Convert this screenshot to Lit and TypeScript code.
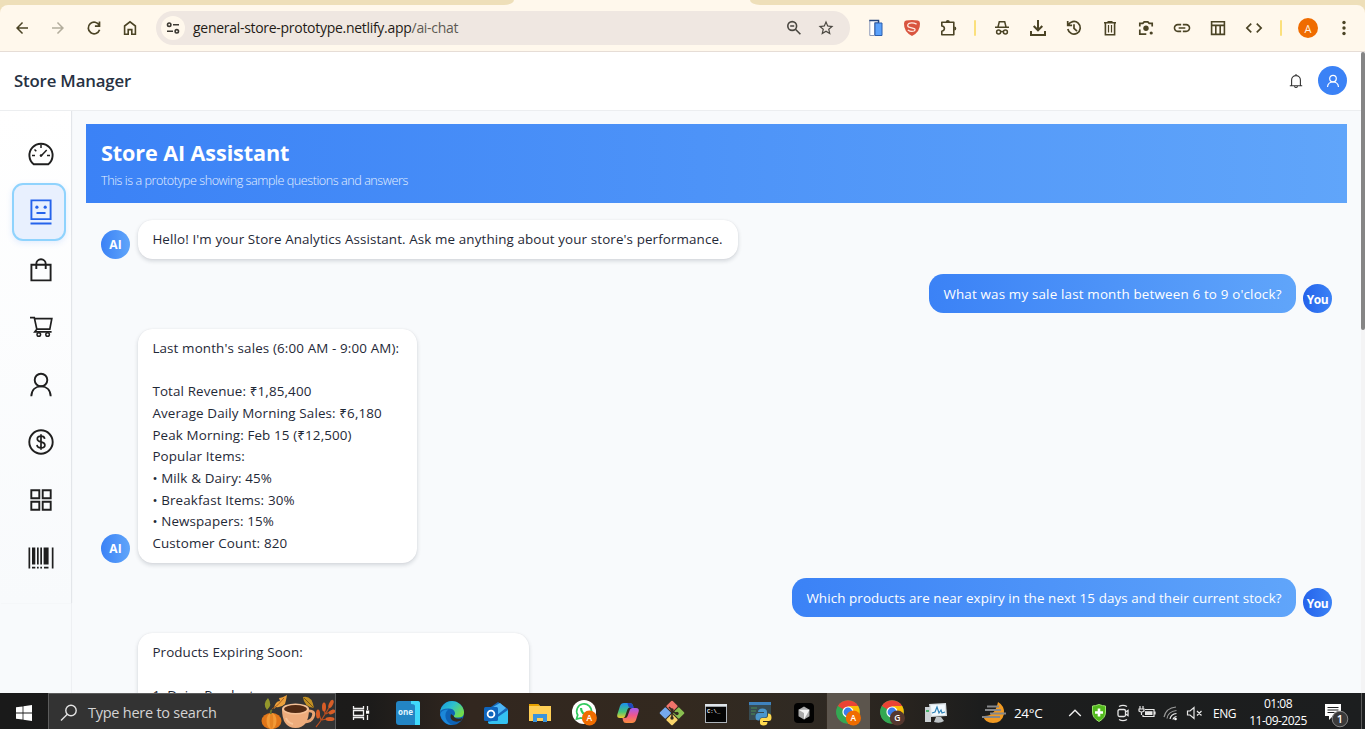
import { LitElement, html, css, svg } from "lit";
import { customElement } from "lit/decorators.js";

const icon = (w: number, h: number, body: unknown, box = `0 0 ${w} ${h}`) =>
  html`<svg width=${w} height=${h} viewBox=${box} fill="none">${body}</svg>`;
const material = (d: string, size = 18) =>
  icon(size, size, svg`<path fill="currentColor" d=${d}/>`, "0 0 24 24");

const BACK = "M20 11H7.83l5.59-5.59L12 4l-8 8 8 8 1.41-1.41L7.83 13H20z";
const FORWARD = "M4 11h12.17l-5.59-5.59L12 4l8 8-8 8-1.41-1.41L16.17 13H4z";
const STAR =
  "M22 9.24l-7.19-.62L12 2 9.19 8.63 2 9.24l5.46 4.73L5.82 21 12 17.27 18.18 21l-1.63-7.03L22 9.24zM12 15.4l-3.76 2.27 1-4.28-3.32-2.88 4.38-.38L12 6.1l1.71 4.04 4.38.38-3.32 2.88 1 4.28L12 15.4z";
const LINK =
  "M3.9 12c0-1.71 1.39-3.1 3.1-3.1h4V7H7c-2.76 0-5 2.24-5 5s2.24 5 5 5h4v-1.9H7c-1.71 0-3.1-1.39-3.1-3.1zM8 13h8v-2H8v2zm9-6h-4v1.9h4c1.71 0 3.1 1.39 3.1 3.1s-1.39 3.1-3.1 3.1h-4V17h4c2.76 0 5-2.24 5-5s-2.24-5-5-5z";
const CODE =
  "M9.4 16.6L4.8 12l4.6-4.6L8 6l-6 6 6 6 1.4-1.4zm5.2 0l4.6-4.6-4.6-4.6L16 6l6 6-6 6-1.4-1.4z";

@customElement("browser-bar")
class BrowserBar extends LitElement {
  static styles = css`
    :host { display: block; height: 52px; background: #eedfb9; font-family: "Open Sans", "Noto Sans", sans-serif; overflow: hidden; }
    .tabs { height: 5px; display: flex; padding-left: 504px; }
    .tab { width: 256px; height: 5px; background: #fff8ec; display: flex; justify-content: space-between; }
    .tab i { width: 10px; height: 5px; background: #eedfb9; }
    .tab i:first-child { border-bottom-right-radius: 10px 5px; }
    .tab i:last-child { border-bottom-left-radius: 10px 5px; }
    .bar { height: 47px; box-sizing: border-box; background: #fff8ec; border-bottom: 1px solid #e6ddd6; border-radius: 8px 8px 0 0; display: flex; align-items: center; padding-left: 4px; color: #4b4425; }
    .slot { width: 36px; height: 36px; flex: none; display: grid; place-items: center; }
    .dim { color: #b3ad9c; }
    .pill { width: 694px; height: 34px; box-sizing: border-box; flex: none; margin: 0 8px; border-radius: 17px; background: #efe7e1; display: flex; align-items: center; padding: 0 8px 0 5px; color: #4a4740; }
    .site { width: 24px; height: 24px; border-radius: 50%; background: #fff8ec; display: grid; place-items: center; }
    .url { margin-left: 8px; flex: 1; font-size: 14px; letter-spacing: -0.29px; color: #1f1b16; white-space: nowrap; padding-bottom: 1px; }
    .path { color: #5d5a52; }
    .mini { width: 32px; display: grid; place-items: center; }
    .rule { width: 18px; flex: none; display: grid; place-items: center; }
    .rule i { width: 2px; height: 16px; background: #fbe07c; border-radius: 1px; }
    .me { width: 20px; height: 20px; border-radius: 50%; background: #ef6c00; color: #fff3e0; font-size: 11px; display: grid; place-items: center; line-height: 1; }
  `;
  render() {
    const slots = [
      icon(18, 18, svg`<g stroke="currentColor" stroke-width="1.5"><path d="M2 8.300h14M5 8l1.300-5.200h5.400L13 8"/><circle cx="5.600" cy="13" r="2"/><circle cx="12.400" cy="13" r="2"/><path d="M7.600 12.600h2.800"/></g>`),
      icon(18, 18, svg`<path stroke="currentColor" stroke-width="2" d="M9 1v10M4.700 7L9 11.300 13.300 7M2 12v4h14v-4"/>`),
      icon(18, 18, svg`<g stroke="currentColor" stroke-width="1.700"><path d="M3.200 6.200A6.300 6.300 0 1 1 2.800 10M2.700 2v4.400h4.400"/><path d="M9 5.200V9.300l3 2.800"/></g>`),
      icon(18, 18, svg`<path stroke="currentColor" stroke-width="1.600" d="M3 3.700h12M6.500 2.700h5M4.400 4v11.700h9.200V4"/><path stroke="currentColor" stroke-width="1.200" d="M7.500 6v7.500M10.500 6v7.500"/>`),
      icon(18, 18, svg`<g stroke="currentColor" stroke-width="1.700"><path d="M2.800 7.500V4.400h3L7.200 2.900h3.600l1.400 1.500h3v3.100M2.800 10.500v4.700h6.500"/></g><circle cx="9" cy="9.300" r="2.700" fill="currentColor"/><circle cx="14.200" cy="14" r="1.600" fill="currentColor"/>`),
      material(LINK, 20),
      icon(18, 18, svg`<path stroke="currentColor" stroke-width="1.600" d="M2.600 2.800h12.800v12.600H2.600zM2 6.400h14M6.800 6.400v9M11.200 6.400v9"/>`),
      material(CODE, 20),
    ];
    return html`
      <div class="tabs"><div class="tab"><i></i><i></i></div></div>
      <div class="bar">
        <div class="slot">${material(BACK)}</div>
        <div class="slot dim">${material(FORWARD)}</div>
        <div class="slot">${icon(18, 18, svg`<path stroke="currentColor" stroke-width="1.700" d="M14.300 6.400A5.800 5.800 0 1 0 14.600 10.800M14.500 2.600v4.600H9.900"/>`)}</div>
        <div class="slot">${icon(18, 18, svg`<path stroke="currentColor" stroke-width="1.600" d="M3.600 7L9 2.800 14.400 7v8.200h-3.600v-4.600H7.200v4.600H3.600z"/>`)}</div>
        <div class="pill">
          <div class="site">${icon(16, 16, svg`<g stroke="#3d3a33" stroke-width="1.600"><circle cx="4.200" cy="4.700" r="1.700"/><path d="M8 4.700h6M2 11.300h6"/><circle cx="11.800" cy="11.300" r="1.700"/></g>`)}</div>
          <div class="url">general-store-prototype.netlify.app<span class="path">/ai-chat</span></div>
          <div class="mini">${icon(18, 18, svg`<g stroke="currentColor" stroke-width="1.600"><circle cx="7.200" cy="7" r="4.400"/><path d="M10.400 10.300l5 5M5.200 7h4"/></g>`)}</div>
          <div class="mini">${material(STAR)}</div>
        </div>
        <div class="slot">${icon(16, 18, svg`<path d="M1.800 1.500h9v2H6.500v13H1.800z" fill="#fff" stroke="#8a99b8"/><path d="M1.300 1.500h9.200v3" stroke="#24457c" stroke-width="1.400"/><path d="M7 4h7v12.500H7z" fill="#5ba2fb" stroke="#2c5fae"/>`)}</div>
        <div class="slot">${icon(18, 18, svg`<path fill="#d9553f" d="M3 1.600Q9 .2 15 1.600q2 .5 2 3Q17.300 13 9 17Q.7 13 1 4.600q0-2.500 2-3z"/><path stroke="#ffe9e0" stroke-width="1.300" d="M13.600 5.200Q9 2.800 5.600 4.600q-2 2.200.4 3.600l5.200 1.300q1.800 1.200-.2 2.500-3 1.200-6.200-1"/>`)}</div>
        <div class="slot">${icon(18, 18, svg`<path stroke="currentColor" stroke-width="1.600" stroke-linejoin="round" d="M2.800 3.200h12v12.600h-12v-3.600q2.600-.3 2.600-2.600T2.800 7z"/><path fill="currentColor" d="M6.800 3a2 2 0 0 1 4 0zM15.300 7.400a2 2 0 0 1 0 4z"/>`)}</div>
        <div class="rule"><i></i></div>
        ${slots.map((s) => html`<div class="slot">${s}</div>`)}
        <div class="rule"><i></i></div>
        <div class="slot"><div class="me">A</div></div>
        <div class="slot">${icon(4, 16, svg`<g fill="currentColor"><circle cx="2" cy="2.500" r="1.700"/><circle cx="2" cy="8" r="1.700"/><circle cx="2" cy="13.500" r="1.700"/></g>`)}</div>
      </div>`;
  }
}

@customElement("side-nav")
class SideNav extends LitElement {
  static styles = css`
    :host { display: block; width: 72px; flex: none; box-sizing: border-box; border-right: 1px solid #eef0f3; background: linear-gradient(#fff, #f8fafc 493px); }
    .list { height: 492px; box-sizing: border-box; padding: 14.600px 0 0 12px; box-shadow: 1px 0 1px #e3e6ea; }
    .item { width: 54px; height: 57.600px; box-sizing: border-box; display: grid; place-items: center; padding: 0 0 0 3px; color: #1f1f1f; border-radius: 11px; }
    .on { background: #e8f0fe; border: 2px solid #8fd3fd; color: #2563eb; box-shadow: 0 2px 6px rgba(59,130,246,.14); }
  `;
  render() {
    const s = (body: unknown) => icon(28, 28, svg`<g stroke="currentColor" stroke-width="1.900">${body}</g>`);
    const items = [
      s(svg`<path d="M6.700 24.300A11.600 11.600 0 1 1 21.300 24.300z" stroke-linejoin="round"/><path stroke-width="1.500" d="M14 4.500v3.600M5 15.500h3M20 15.500h3M7.500 9.500l1.800 1.800M14.500 15.500l5.200-5.500"/><circle cx="14" cy="15.600" r="1.300" fill="currentColor" stroke="none"/>`),
      s(svg`<path d="M4.400 2.400h19.200v18.700H4.400zM3.500 25.500h21M9.500 15h9"/><circle cx="9.900" cy="9.200" r="1.600" fill="currentColor" stroke="none"/><circle cx="18.200" cy="9.200" r="1.600" fill="currentColor" stroke="none"/>`),
      s(svg`<path d="M4.400 8.800h19.200v15.600H4.400zM9.300 13V8a4.700 4.700 0 0 1 9.400 0v5"/>`),
      s(svg`<path stroke-width="1.700" d="M3 4.600h4.300l2.500 11.600h13L24.800 5.600H7.500M9.800 16.200l-2 2.600h16.800"/><circle cx="11.800" cy="21.500" r="1.800" stroke-width="1.500"/><circle cx="20.600" cy="21.500" r="1.800" stroke-width="1.500"/>`),
      s(svg`<circle cx="14" cy="9" r="6.300"/><path d="M4.300 25.300c.3-6.500 4.300-9.900 9.700-9.900s9.400 3.400 9.700 9.900"/>`),
      s(svg`<circle cx="14" cy="14" r="11.700"/><path stroke-width="1.700" d="M17.700 10.800c-.2-1.800-1.600-2.700-3.700-2.700s-3.700 1-3.700 2.800c0 4 7.600 2 7.600 6.100 0 1.900-1.600 2.900-3.900 2.900s-3.800-1-4-3M14 6.300v15.400"/>`),
      s(svg`<path d="M4.300 4.300h8v8h-8zM15.700 4.300h8v8h-8zM4.300 15.700h8v8h-8zM15.700 15.700h8v8h-8z"/>`),
      s(svg`<path stroke="none" fill="currentColor" d="M1.500 3.500h1.700v21H1.500zM5 3.500h3.300v17H5zM10 3.500h1.700v17H10zM13.300 3.500H15v17h-1.700zM16.600 3.500h5v17h-5zM24.800 3.500h1.700v21h-1.700zM5 22.700h3.300v1.700H5zM10 22.700h1.700v1.700H10zM13.300 22.700H15v1.700h-1.700zM17 22.700h4.500v1.700H17z"/>`),
    ];
    return html`<div class="list">${items.map((it, i) => html`<div class="item ${i === 1 ? "on" : ""}">${it}</div>`)}</div>`;
  }
}

interface Message { from: "ai" | "you"; lines: string[]; size: string; }
const MESSAGES: Message[] = [
  { from: "ai", size: "m1", lines: ["Hello! I'm your Store Analytics Assistant. Ask me anything about your store's performance."] },
  { from: "you", size: "m2", lines: ["What was my sale last month between 6 to 9 o'clock?"] },
  { from: "ai", size: "m3", lines: ["Last month's sales (6:00 AM - 9:00 AM):", "", "Total Revenue: ₹1,85,400", "Average Daily Morning Sales: ₹6,180", "Peak Morning: Feb 15 (₹12,500)", "Popular Items:", "• Milk & Dairy: 45%", "• Breakfast Items: 30%", "• Newspapers: 15%", "Customer Count: 820"] },
  { from: "you", size: "m4", lines: ["Which products are near expiry in the next 15 days and their current stock?"] },
  { from: "ai", size: "m5", lines: ["Products Expiring Soon:", "", "1. Dairy Products:"] },
];

@customElement("chat-view")
class ChatView extends LitElement {
  static styles = css`
    :host { display: block; flex: 1; min-width: 0; padding: 13px 14px 0; overflow: hidden; }
    .hero { height: 79px; box-sizing: border-box; padding: 14px 15px; background: linear-gradient(90deg, #3b82f6, #60a5fa); color: #fff; }
    .title { font: 700 21.600px/30px "Open Sans", "Noto Sans", sans-serif; letter-spacing: -0.100px; white-space: nowrap; }
    .sub { font: 300 12.600px/18px "Open Sans", sans-serif; margin-top: 4px; letter-spacing: -0.440px; color: #e4effe; white-space: nowrap; }
    .log { padding: 16.600px 15px 0; display: flex; flex-direction: column; gap: 15.500px; }
    .row { display: flex; align-items: flex-end; gap: 8px; }
    .row.you { flex-direction: row-reverse; gap: 7px; }
    .avatar { width: 29px; height: 29px; box-sizing: border-box; padding-top: 2px; flex: none; border-radius: 50%; display: grid; place-items: center; color: #fff; font: 700 12px/1 "Open Sans", sans-serif; background: linear-gradient(90deg, #3b82f6, #60a5fa); }
    .you .avatar { background: linear-gradient(90deg, #2563eb, #3b82f6); letter-spacing: -0.400px; }
    .bubble { box-sizing: border-box; padding: 9.500px 0 7.900px 14.400px; border-radius: 14.400px; background: #fff; box-shadow: 0 2px 4px rgba(15,23,42,.16), 0 0 1px rgba(15,23,42,.1); font: 400 13.400px/21.650px "Open Sans", "Noto Sans", sans-serif; letter-spacing: 0.110px; color: #1f2937; white-space: nowrap; }
    .you .bubble { background: linear-gradient(90deg, #3b82f6, #60a5fa); color: #fff; box-shadow: none; }
    .line { min-height: 21.650px; }
    .m1 { width: 600px; }
    .m2 { width: 367px; letter-spacing: 0.170px; }
    .m3 { width: 278.500px; letter-spacing: 0.130px; }
    .m4 { width: 504px; letter-spacing: 0.095px; }
    .m5 { width: 390.500px; height: 180px; }
  `;
  render() {
    return html`
      <div class="hero"><div class="title">Store AI Assistant</div><div class="sub">This is a prototype showing sample questions and answers</div></div>
      <div class="log">
        ${MESSAGES.map((m) => html`<div class="row ${m.from}">
          <div class="avatar">${m.from === "ai" ? "AI" : "You"}</div>
          <div class="bubble ${m.size}">${m.lines.map((l) => html`<div class="line"><span>${l}</span></div>`)}</div>
        </div>`)}
      </div>`;
  }
}

const chromeLogo = (badge: string, color: string) => icon(26, 28, svg`
  <circle cx="13" cy="13" r="11.800" fill="#34a853"/>
  <path fill="#ea4335" d="M13 13L2.800 7.100A11.800 11.800 0 0 1 23.200 7.100z"/>
  <path fill="#fbbc04" d="M13 7.100h10.200A11.800 11.800 0 0 1 13 24.800l5-9z"/>
  <path fill="#34a853" d="M2.800 7.100l5.500 8.600 4.700 2.300-3.400 6.200A11.800 11.800 0 0 1 2.800 7.100z"/>
  <circle cx="13" cy="13" r="5.600" fill="#fff"/><circle cx="13" cy="13" r="4.400" fill="#3b7ded"/>
  <circle cx="18.400" cy="19" r="7.600" fill=${color}/>
  <text x="18.400" y="22" text-anchor="middle" font-size="8.500" font-weight="600" font-family="Open Sans" fill="#fff">${badge}</text>`);

@customElement("task-bar")
class TaskBar extends LitElement {
  static styles = css`
    :host { display: flex; height: 36px; flex: none; align-items: center; overflow: hidden; color: #fff; font-family: "Open Sans", "Noto Sans", sans-serif; background: linear-gradient(90deg, #1a1a1a 0, #1c1b1a 370px, #32271f 470px, #33291f 680px, #302a23 800px, #29241f 900px, #1c1d1d 980px, #1c1e1f 100%); }
    svg { display: block; }
    .start { width: 48px; display: grid; place-items: center; padding-top: 4px; }
    .search { width: 288px; height: 36px; box-sizing: border-box; flex: none; background: #333; border: 1px solid #5c5c5c; border-bottom: 0; display: flex; align-items: center; padding-left: 11px; }
    .hint { flex: 1; margin-left: 11px; font-size: 14.500px; line-height: 20px; letter-spacing: -0.250px; color: #d4d4d4; white-space: nowrap; padding-top: 3px; }
    .mag { padding-top: 3px; }
    .view { width: 50px; display: grid; place-items: center; padding-top: 4px; }
    .app { width: 44px; height: 36px; flex: none; display: grid; place-items: center; padding-top: 4px; box-sizing: border-box; }
    .active { background: #5c554d; box-shadow: inset 1px 0 #332b23; }
    .weather { width: 105px; padding: 4px 0 0 24px; display: flex; align-items: center; gap: 8px; font-size: 13.500px; letter-spacing: -0.350px; flex: none; box-sizing: border-box; white-space: nowrap; }
    .tray { width: 24px; flex: none; display: grid; place-items: center; padding-top: 4px; }
    .lang { margin-left: 6px; width: 33px; font-size: 12px; letter-spacing: -0.450px; padding-top: 4px; }
    .clock { width: 64px; text-align: center; font-size: 12px; line-height: 17px; letter-spacing: -0.500px; white-space: nowrap; padding-top: 2px; }
    .note { margin-left: 14px; padding-top: 7px; }
    .edge { margin-left: auto; width: 1px; height: 36px; background: #5a5a5a; margin-right: 3px; }
  `;
  render() {
    const apps = [
      icon(24, 24, svg`<rect width="24" height="24" rx="3" fill="#2385c4"/><path d="M15 0h7q2 0 2 2v22h-5V5q0-2-4-2z" fill="#40d9fb"/><text x="2" y="14" font-size="8" font-weight="700" font-family="Open Sans" fill="#e2f5ff" textLength="15" lengthAdjust="spacingAndGlyphs">one</text>`),
      icon(24, 24, svg`<defs><linearGradient id="e1" x1="0" y1="0" x2="1" y2=".6"><stop stop-color="#1795dc"/><stop offset=".5" stop-color="#2dc0cf"/><stop offset="1" stop-color="#72dd4a"/></linearGradient></defs><circle cx="12" cy="12" r="12" fill="#0e63b6"/><path d="M.1 11A12 12 0 0 1 24 11q.2 5.500-6 5.500-4.700 0-4.300-1.600 1.400-1 1.400-3Q14 7.500 8.500 7.500.8 7.500.1 11z" fill="url(#e1)"/><path d="M8.500 8.500C3 12 5 22 13 24Q3 24 .2 14 .5 8.500 8.500 8.500z" fill="#1c88d9"/><path d="M13.700 15c0 2.500 5.300 3.600 9 1.800l-1.700 3q-5 1.800-8.500-.3Q9.500 17 11 13z" fill="#33291f"/>`),
      icon(24, 24, svg`<path d="M4 8l10-7 10 7v13q0 2-2 2H7q-3 0-3-2z" fill="#1768b8"/><path d="M9 6l7-4 6 5-9 7z" fill="#4db6f5"/><path d="M8 20l16-11v12q0 2-2 2H7q-3 0-3-2z" fill="#35c2f1"/><rect y="6" width="14" height="14" rx="1.500" fill="#0f65bd"/><circle cx="7" cy="13" r="3.400" stroke="#fff" stroke-width="1.800"/>`),
      icon(22, 20, svg`<path d="M0 1h9l2 2h11v15H0z" fill="#ffcf56"/><path d="M0 1h9l2 2H0z" fill="#e6a100"/><path d="M4 11h14v8h-4v-4H8v4H4z" fill="#3a94dc"/>`),
      icon(26, 28, svg`<circle cx="13" cy="13" r="12" fill="#fff"/><path d="M5.500 20l1.200-4A7.400 7.400 0 1 1 10 19z" stroke="#2fca5c" stroke-width="1.700"/><path d="M10 9c0 4 3 7 6 7" stroke="#2fca5c" stroke-width="2.200"/><circle cx="18.400" cy="19" r="7.500" fill="#ef6c00"/><text x="18.400" y="22" text-anchor="middle" font-size="8.500" font-weight="600" font-family="Open Sans" fill="#fff">A</text>`),
      icon(24, 22, svg`<defs><linearGradient id="c1" x1="0" y1="0" x2="0" y2="1"><stop stop-color="#1a91f0"/><stop offset=".6" stop-color="#48c774"/><stop offset="1" stop-color="#f3cb2e"/></linearGradient><linearGradient id="c2" x1="0" y1="0" x2="0" y2="1"><stop stop-color="#a35cf2"/><stop offset=".5" stop-color="#f0578d"/><stop offset="1" stop-color="#f98d3c"/></linearGradient></defs><path d="M8 1h6q2.500 0 3 2.500l.5 2h-3.500q-2 0-2.600 2L9 14.500Q8.300 16 6.500 16H4Q.5 16 1.300 12.500L4 4Q5 1 8 1z" fill="url(#c1)"/><path d="M16 21h-6q-2.500 0-3-2.500L6.500 16H9q2 0 2.600-2L14 7.500Q14.700 6 16.500 6H20q3.500 0 2.700 3.500L20 18q-1 3-4 3z" fill="url(#c2)"/><path d="M14 1q2.500 0 3 2.500l.7 2.500H14q-2-1-2.500-5z" fill="#2149bd"/>`),
      icon(26, 26, svg`<g transform="rotate(45 13 13)"><rect x="4" y="4" width="8.500" height="8.500" rx="1" fill="#f0746b"/><rect x="13.500" y="4" width="8.500" height="8.500" rx="1" fill="#89bf50"/><rect x="4" y="13.500" width="8.500" height="8.500" rx="1" fill="#75a9ec"/><rect x="13.500" y="13.500" width="8.500" height="8.500" rx="1" fill="#fad56b"/></g><path stroke="#33291f" stroke-width="1.500" d="M10 7l3 3v8M13 11l5 3"/><circle cx="13" cy="10" r="1.700" fill="#33291f"/><circle cx="18" cy="13.500" r="1.700" fill="#33291f"/><circle cx="13" cy="18" r="1.700" fill="#33291f"/>`),
      icon(22, 19, svg`<rect width="22" height="19" fill="#aeb4ba"/><path d="M0 0h22v2.500H0z" fill="#dfe5ea"/><path d="M1 2.800h20V18H1z" fill="#050505"/><text x="2" y="8.500" font-size="5.500" font-weight="700" font-family="Liberation Mono" fill="#eee">C:\\_</text>`),
      icon(26, 26, svg`<path d="M2 2h22v18H2z" fill="#374b52"/><path d="M2 2h22v3H2z" fill="#3f82bd"/><path stroke="#4e8e54" d="M4 8h6M4 11h5M4 14h4"/><path d="M12 13h5v-1h-6q0-3.500 4.500-3.500T20 12v3.500q0 2-2 2h-3q-2.500 0-2.500 3Q8.500 21 8.500 17t3.500-4z" fill="#4a96cc"/><path d="M21 13.500q3.500 0 3.500 4t-3.500 3.500h-5v1h4.500q0 3.500-4 3.500T13 22v-2q0-2 2-2h3.500q2.500 0 2.500-3z" fill="#ffd94f"/>`),
      icon(20, 20, svg`<rect width="20" height="20" rx="4" fill="#020202"/><path d="M10 3.500l5.500 3.200v6.600L10 16.500l-5.500-3.200V6.700z" fill="#ababab"/><path d="M4.500 6.700h11L10 16.500V10z" fill="#f4f4f4"/>`),
      chromeLogo("A", "#ef6c00"),
      chromeLogo("G", "#54372f"),
      icon(24, 22, svg`<path d="M1 5h6v15H1z" fill="#cbd1d4"/><path d="M2 8h3v2H2z" fill="#49b36b"/><path d="M5 2l17-1 1 13-16 1z" fill="#d8dfe2"/><path d="M6.800 3.300l14-.8.700 10.500-13.500.8z" fill="#f2f9fd"/><path d="M8 11l3-1 2-5 2 6 2-3 1 3 3-1" stroke="#2f83b7" stroke-width="1.200"/><path d="M12 15h5l3 4q-4 3-10 1z" fill="#bfc5c8"/>`),
    ];
    const tray = [
      icon(14, 10, svg`<path d="M1.200 8L7 2.200 12.800 8" stroke="#eee" stroke-width="1.400"/>`),
      icon(16, 18, svg`<path d="M8 .5q4 1.500 6.500 1.500v6Q14.500 14 8 17.500 1.500 14 1.500 8V2Q4 2 8 .5z" fill="#52b91d" stroke="#9be36b"/><path d="M8 4.500v8M4 8.500h8" stroke="#fff" stroke-width="2.600"/>`),
      icon(14, 18, svg`<g stroke="#e7e7e7" stroke-width="1.300"><rect x="2" y="5.500" width="7.500" height="7" rx="1.500"/><path d="M9.500 8l2.500-1.500v5L9.500 10M3 2.500Q7 .2 11 2.500M3 15.500q4 2.300 8 0"/></g>`),
      icon(18, 14, svg`<g stroke="#e7e7e7" stroke-width="1.200"><path d="M7 3.500h9v7H5V9M17 5.500v3"/><path d="M2 0v2.500M5 0v2.500M1 3h5v2q-2.500 2-5 0zM3.500 6v3"/></g><path fill="#e7e7e7" d="M7 5.200h7.500V9H7z"/>`),
      icon(16, 16, svg`<g stroke="#9a9a9a" stroke-width="1.200"><path d="M1 12Q3 3 13 2M4 13.500Q5 6.500 13.500 5.500"/><path stroke="#eee" d="M7 14q1-5 6.500-5.500M10 14.500q.5-2.500 3.500-3"/></g><circle cx="12.500" cy="14" r="1.300" fill="#fff"/>`),
      icon(18, 14, svg`<path stroke="#e7e7e7" stroke-width="1.200" d="M1.500 5h2.500l4-3.500v11L4 9H1.500zM11 5l4.500 4.500M15.500 5L11 9.500"/>`),
    ];
    return html`
      <div class="start">${icon(16, 16, svg`<path fill="#fff" d="M0 2.300l6.600-.9v6.200H0zM7.400 1.300L16 0v7.600H7.400zM0 8.400h6.600v6.200L0 13.700zM7.400 8.400H16V16l-8.600-1.300z"/>`)}</div>
      <div class="search">
        <div class="mag">${icon(17, 18, svg`<g stroke="#e4e4e4" stroke-width="1.400"><circle cx="11" cy="6.500" r="5.200"/><path d="M7.300 10.300L1 16.500"/></g>`)}</div>
        <div class="hint">Type here to search</div>
        ${icon(74, 35, svg`
          <path d="M6 16q-5-6 1-12 5 7-1 12l-1 3" fill="#93972b"/>
          <path d="M13 15q1-8 6-8l-1-3q3 0 8-3-1 6-2 9-4 4-9 3z" fill="#eca13c"/><path d="M11 15q6-3 12-11" stroke="#a95d19"/>
          <ellipse cx="10.500" cy="27" rx="10" ry="8" fill="#e0761a"/><ellipse cx="10.500" cy="27" rx="5" ry="8" fill="#f29a36"/><ellipse cx="10.500" cy="27" rx="1.800" ry="8" fill="#e58423"/><path d="M10 20q-1-3 1-4" stroke="#69732d" stroke-width="1.800"/>
          <path d="M42 3q9-2 11 11-10-1-11-11z" fill="#c29123"/><path d="M43 4l10 10" stroke="#765419"/>
          <path d="M46 17q9-1 6 6-2 5-9 5" stroke="#e8a574" stroke-width="3"/>
          <path d="M21 15h27q0 19-13.500 19T21 15z" fill="#edac7c"/><path d="M25 24q2 5 7 6" stroke="#f6c398" stroke-width="2"/><ellipse cx="34.500" cy="15" rx="13.500" ry="5.500" fill="#f4c096"/><ellipse cx="34.500" cy="15" rx="11.500" ry="4" fill="#512a13"/>
          <path d="M55 33Q61 26 69 12M60 26l-3-9M64 20l-1-8M61 26l9-2M65 20l7-4" stroke="#b94e20" stroke-width="1.200"/><g fill="#d95e27"><ellipse cx="57" cy="20" rx="2" ry="4.500"/><ellipse cx="63" cy="13" rx="2" ry="4.500"/><ellipse cx="70" cy="10" rx="2" ry="4.500" transform="rotate(25 70 10)"/><ellipse cx="69" cy="25" rx="4.500" ry="2"/><ellipse cx="71" cy="18" rx="3.500" ry="2" transform="rotate(-25 71 18)"/></g>`)}
      </div>
      <div class="view">${icon(18, 16, svg`<path stroke="#f0f0f0" stroke-width="1.300" d="M1.500 1v2.500h10V1M1.500 15v-2.500h10V15M1.500 5.500h10v5h-10zM15.500 1v4M15.500 10v5"/><path fill="#fff" d="M14 5.500h3.200v3.200H14z"/>`)}</div>
      ${apps.map((a, i) => html`<div class="app ${i === 10 ? "active" : ""}">${a}</div>`)}
      <div class="weather">${icon(24, 24, svg`<path d="M16 1q7 4 6 12-2 9-11 9-8 0-10-7 12 1 15-14z" fill="#f19a22"/><path stroke="#85878a" stroke-width="1.800" d="M5 5.500h12M3 9h16M8 12.500h16M0 16h18"/>`)}<span>24°C</span></div>
      ${tray.map((t) => html`<div class="tray">${t}</div>`)}
      <div class="lang">ENG</div>
      <div class="clock">01:08<br>11-09-2025</div>
      <div class="note">${icon(26, 26, svg`<path fill="#fff" d="M1 2h16v12H9l-4 4v-4H1z"/><path stroke="#1c1e1f" stroke-width="1.200" d="M3.500 5.500h11M3.500 8h11M3.500 10.500h7"/><circle cx="16" cy="17" r="7.800" fill="#3a3a3a" stroke="#858585"/><text x="16" y="21" text-anchor="middle" font-size="11" font-weight="600" font-family="Open Sans" fill="#fff">1</text>`)}</div>
      <div class="edge"></div>`;
  }
}

@customElement("app-root")
class AppRoot extends LitElement {
  static styles = css`
    :host { display: flex; flex-direction: column; width: 1365px; height: 729px; overflow: hidden; background: #f8fafc; }
    .page { height: 641px; display: flex; overflow: hidden; }
    .site { flex: 1; min-width: 0; display: flex; flex-direction: column; }
    header { height: 59px; flex: none; box-sizing: border-box; background: #fff; display: flex; align-items: center; padding: 0 14px 1px; border-bottom: 1px solid #eceef0; }
    .brand { flex: 1; font: 600 16.800px/24px "Open Sans", "Noto Sans", sans-serif; color: #273142; letter-spacing: -0.170px; white-space: nowrap; }
    .bell { margin-right: 14px; display: grid; }
    .user { width: 29px; height: 29px; border-radius: 50%; background: #3b82f6; display: grid; place-items: center; }
    .body { flex: 1; min-height: 0; display: flex; overflow: hidden; }
    .scroll { width: 4px; background: #f4f4f5; }
    .thumb { height: 278px; background: #858585; border-radius: 2px; }
  `;
  render() {
    return html`
      <browser-bar></browser-bar>
      <div class="page">
        <div class="site">
          <header>
            <div class="brand">Store Manager</div>
            <div class="bell">${icon(16, 16, svg`<path d="M1.800 12.700h12.400M3.600 12.500V7a4.400 4.400 0 0 1 8.800 0v5.500M8 1v1.600M6.300 13.500q1.700 2 3.400 0" stroke="#333" stroke-width="1.100"/>`)}</div>
            <div class="user">${icon(14, 14, svg`<circle cx="7" cy="4.600" r="3.300" stroke="#fff" stroke-width="1.200"/><path d="M1.500 13Q2 8 7 8t5.500 5" stroke="#fff" stroke-width="1.200"/>`)}</div>
          </header>
          <div class="body"><side-nav></side-nav><chat-view></chat-view></div>
        </div>
        <div class="scroll"><div class="thumb"></div></div>
      </div>
      <task-bar></task-bar>`;
  }
}
